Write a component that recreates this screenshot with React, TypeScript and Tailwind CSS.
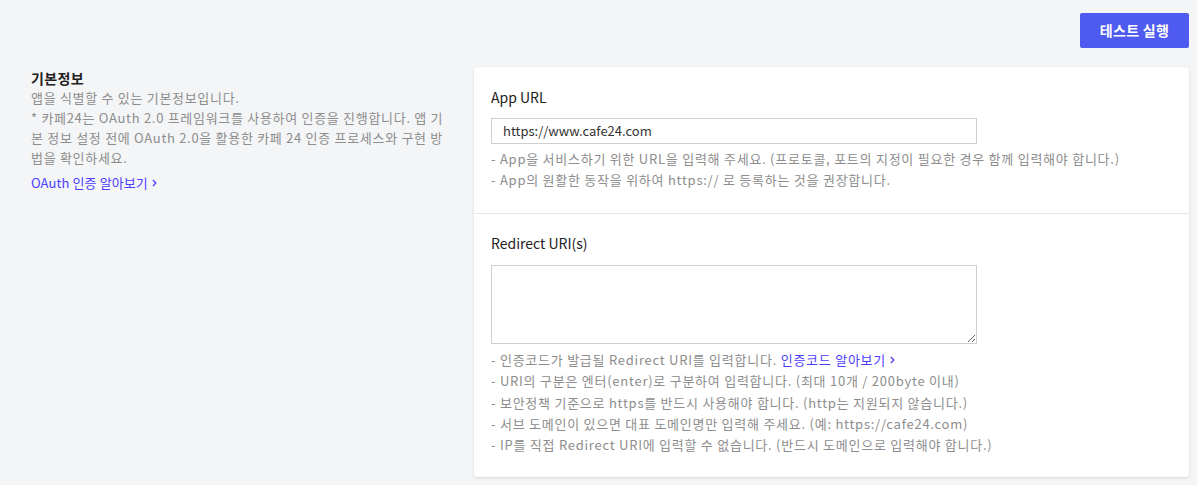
const font = { fontFamily: '"Noto Sans CJK KR", "Noto Sans", sans-serif' };

const urlHelp = [
  "- App을 서비스하기 위한 URL을 입력해 주세요. (프로토콜, 포트의 지정이 필요한 경우 함께 입력해야 합니다.)",
  "- App의 원활한 동작을 위하여 https:// 로 등록하는 것을 권장합니다.",
];

const redirectHelp = [
  "- URI의 구분은 엔터(enter)로 구분하여 입력합니다. (최대 10개 / 200byte 이내)",
  "- 보안정책 기준으로 https를 반드시 사용해야 합니다. (http는 지원되지 않습니다.)",
  "- 서브 도메인이 있으면 대표 도메인명만 입력해 주세요. (예: https://cafe24.com)",
  "- IP를 직접 Redirect URI에 입력할 수 없습니다. (반드시 도메인으로 입력해야 합니다.)",
];

const Chevron = () => (
  <svg width="5" height="8" viewBox="0 0 5 8" className="ml-[4px] inline-block">
    <path d="M1 1l2.8 3L1 7" fill="none" stroke="currentColor" strokeWidth="1.3" />
  </svg>
);

export default function App() {
  return (
    <div style={font} className="min-h-[485px] w-full bg-[#f4f5f7] pr-[8px] pt-[13px]">
      <div className="flex justify-end">
        <button className="h-[35px] w-[109px] rounded-[2px] bg-[#4f5af0] text-[14px] font-bold tracking-[0.3px] text-white">
          테스트 실행
        </button>
      </div>

      <div className="mt-[19px] flex">
        <div className="w-[474px] shrink-0 pl-[31px] pr-[28px] pt-[1px]">
          <h2 className="text-[14px] font-semibold leading-[20px] tracking-[0.4px] text-[#222]">기본정보</h2>
          <p className="text-[13px] leading-[20px] tracking-[0.7px] text-[#8d8d8d]">
            앱을 식별할 수 있는 기본정보입니다.
            <br />* 카페24는 OAuth 2.0 프레임워크를 사용하여 인증을 진행합니다. 앱 기본 정보 설정 전에 OAuth 2.0을 활용한 카페 24 인증 프로세스와 구현 방법을 확인하세요.
          </p>
          <a className="mt-[5px] flex items-center text-[13px] leading-[20px] tracking-[0.1px] text-[#4d3dff]">
            OAuth 인증 알아보기
            <Chevron />
          </a>
        </div>

        <div className="flex-1 rounded-[3px] bg-white shadow-[0_1px_3px_rgba(0,0,0,0.12)]">
          <section className="border-b border-[#e6e7ea] px-[17px] pb-[23px] pt-[19px]">
            <label className="block text-[14px] leading-[22px] text-[#222]">App URL</label>
            <div className="mt-[10px] flex h-[26px] w-[486px] items-center border border-[#cfcfcf] px-[11px] text-[13px] text-[#333]">
              https://www.cafe24.com
            </div>
            <ul className="mt-[4px] text-[13px] leading-[21px] tracking-[0.75px] text-[#8d8d8d]">
              {urlHelp.map((t) => (
                <li key={t}>{t}</li>
              ))}
            </ul>
          </section>

          <section className="px-[17px] pb-[22px] pt-[18px]">
            <label className="block text-[14px] leading-[22px] text-[#222]">Redirect URI(s)</label>
            <textarea className="mt-[11px] block h-[79px] w-[486px] resize border border-[#cfcfcf] outline-none" />
            <ul className="mt-[5px] text-[13px] leading-[21.3px] tracking-[0.75px] text-[#8d8d8d]">
              <li className="flex items-center">
                - 인증코드가 발급될 Redirect URI를 입력합니다.&nbsp;
                <span className="flex items-center text-[#4d3dff]">
                  인증코드 알아보기
                  <Chevron />
                </span>
              </li>
              {redirectHelp.map((t) => (
                <li key={t}>{t}</li>
              ))}
            </ul>
          </section>
        </div>
      </div>
    </div>
  );
}
